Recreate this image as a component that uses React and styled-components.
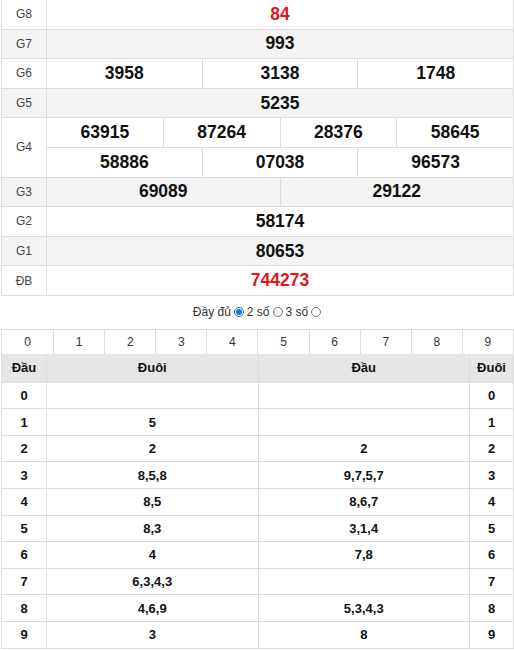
import styled, { createGlobalStyle } from 'styled-components';

const GlobalStyle = createGlobalStyle`
  body {
    margin: 0;
    background: #fff;
    font-family: 'Liberation Sans', Arial, sans-serif;
    color: #222;
  }
`;

const Page = styled.div`
  width: 513px;
  margin-left: 1px;
`;

const Prizes = styled.div`
  border-left: 1px solid #ddd;
  border-right: 1px solid #ddd;
`;

const PrizeRow = styled.div`
  display: flex;
  background: ${(p) => (p.$shaded ? '#f4f4f4' : '#fff')};
  border-bottom: 1px solid #ddd;
`;

const Label = styled.div`
  width: 44px;
  flex-shrink: 0;
  display: flex;
  align-items: center;
  justify-content: center;
  border-right: 1px solid #ddd;
  font-size: 12px;
  color: #444;
`;

const Lines = styled.div`
  flex: 1;
  display: flex;
  flex-direction: column;
`;

const Line = styled.div`
  display: flex;
  height: 28.6px;
  & + & {
    border-top: 1px solid #ddd;
  }
`;

const Value = styled.div`
  flex: 1;
  display: flex;
  align-items: center;
  justify-content: center;
  font-size: 17.5px;
  font-weight: bold;
  color: ${(p) => (p.$red ? '#e3151a' : '#111')};
  & + & {
    border-left: 1px solid #ddd;
  }
`;

const Options = styled.div`
  height: 33px;
  display: flex;
  align-items: center;
  justify-content: center;
  gap: 2px;
  font-size: 12px;
  color: #333;
`;

const Radio = styled.input`
  width: 10px;
  height: 10px;
  margin: 0 1px;
  accent-color: #1a73e8;
`;

const Digits = styled.div`
  display: grid;
  grid-template-columns: repeat(10, 1fr);
  border: 1px solid #ddd;
  border-bottom: none;
`;

const Digit = styled.div`
  height: 24px;
  display: flex;
  align-items: center;
  justify-content: center;
  font-size: 12px;
  color: #333;
  & + & {
    border-left: 1px solid #ddd;
  }
`;

const Grid = styled.div`
  display: grid;
  grid-template-columns: 44px 1fr 1fr 44px;
  border-left: 1px solid #ddd;
  border-right: 1px solid #ddd;
`;

const Cell = styled.div`
  height: ${(p) => (p.$head ? '28.7px' : '26.6px')};
  box-sizing: border-box;
  display: flex;
  align-items: center;
  justify-content: center;
  font-size: 13px;
  font-weight: bold;
  color: #111;
  background: ${(p) => (p.$head ? '#e6e6e6' : '#fff')};
  border-bottom: 1px solid #ddd;
  border-left: ${(p) => (p.$first ? 'none' : '1px solid #ddd')};
`;

const prizes = [
  { name: 'G8', lines: [['84']], red: true },
  { name: 'G7', lines: [['993']] },
  { name: 'G6', lines: [['3958', '3138', '1748']] },
  { name: 'G5', lines: [['5235']] },
  { name: 'G4', lines: [['63915', '87264', '28376', '58645'], ['58886', '07038', '96573']] },
  { name: 'G3', lines: [['69089', '29122']] },
  { name: 'G2', lines: [['58174']] },
  { name: 'G1', lines: [['80653']] },
  { name: 'ĐB', lines: [['744273']], red: true },
];

const tails = ['', '5', '2', '8,5,8', '8,5', '8,3', '4', '6,3,4,3', '4,6,9', '3'];
const heads = ['', '', '2', '9,7,5,7', '8,6,7', '3,1,4', '7,8', '', '5,3,4,3', '8'];

export default function App() {
  return (
    <Page>
      <GlobalStyle />
      <Prizes>
        {prizes.map((p, i) => (
          <PrizeRow key={p.name} $shaded={i % 2 === 1}>
            <Label>{p.name}</Label>
            <Lines>
              {p.lines.map((line, j) => (
                <Line key={j}>
                  {line.map((v, k) => (
                    <Value key={k} $red={p.red}>{v}</Value>
                  ))}
                </Line>
              ))}
            </Lines>
          </PrizeRow>
        ))}
      </Prizes>

      <Options>
        Đầy đủ <Radio type="radio" name="mode" defaultChecked />
        2 số <Radio type="radio" name="mode" />
        3 số <Radio type="radio" name="mode" />
      </Options>

      <Digits>
        {Array.from({ length: 10 }, (_, i) => (
          <Digit key={i}>{i}</Digit>
        ))}
      </Digits>

      <Grid>
        <Cell $head $first>Đầu</Cell>
        <Cell $head>Đuôi</Cell>
        <Cell $head>Đầu</Cell>
        <Cell $head>Đuôi</Cell>
        {tails.map((t, i) => [
          <Cell key={`a${i}`} $first>{i}</Cell>,
          <Cell key={`b${i}`}>{t}</Cell>,
          <Cell key={`c${i}`}>{heads[i]}</Cell>,
          <Cell key={`d${i}`}>{i}</Cell>,
        ])}
      </Grid>
    </Page>
  );
}
